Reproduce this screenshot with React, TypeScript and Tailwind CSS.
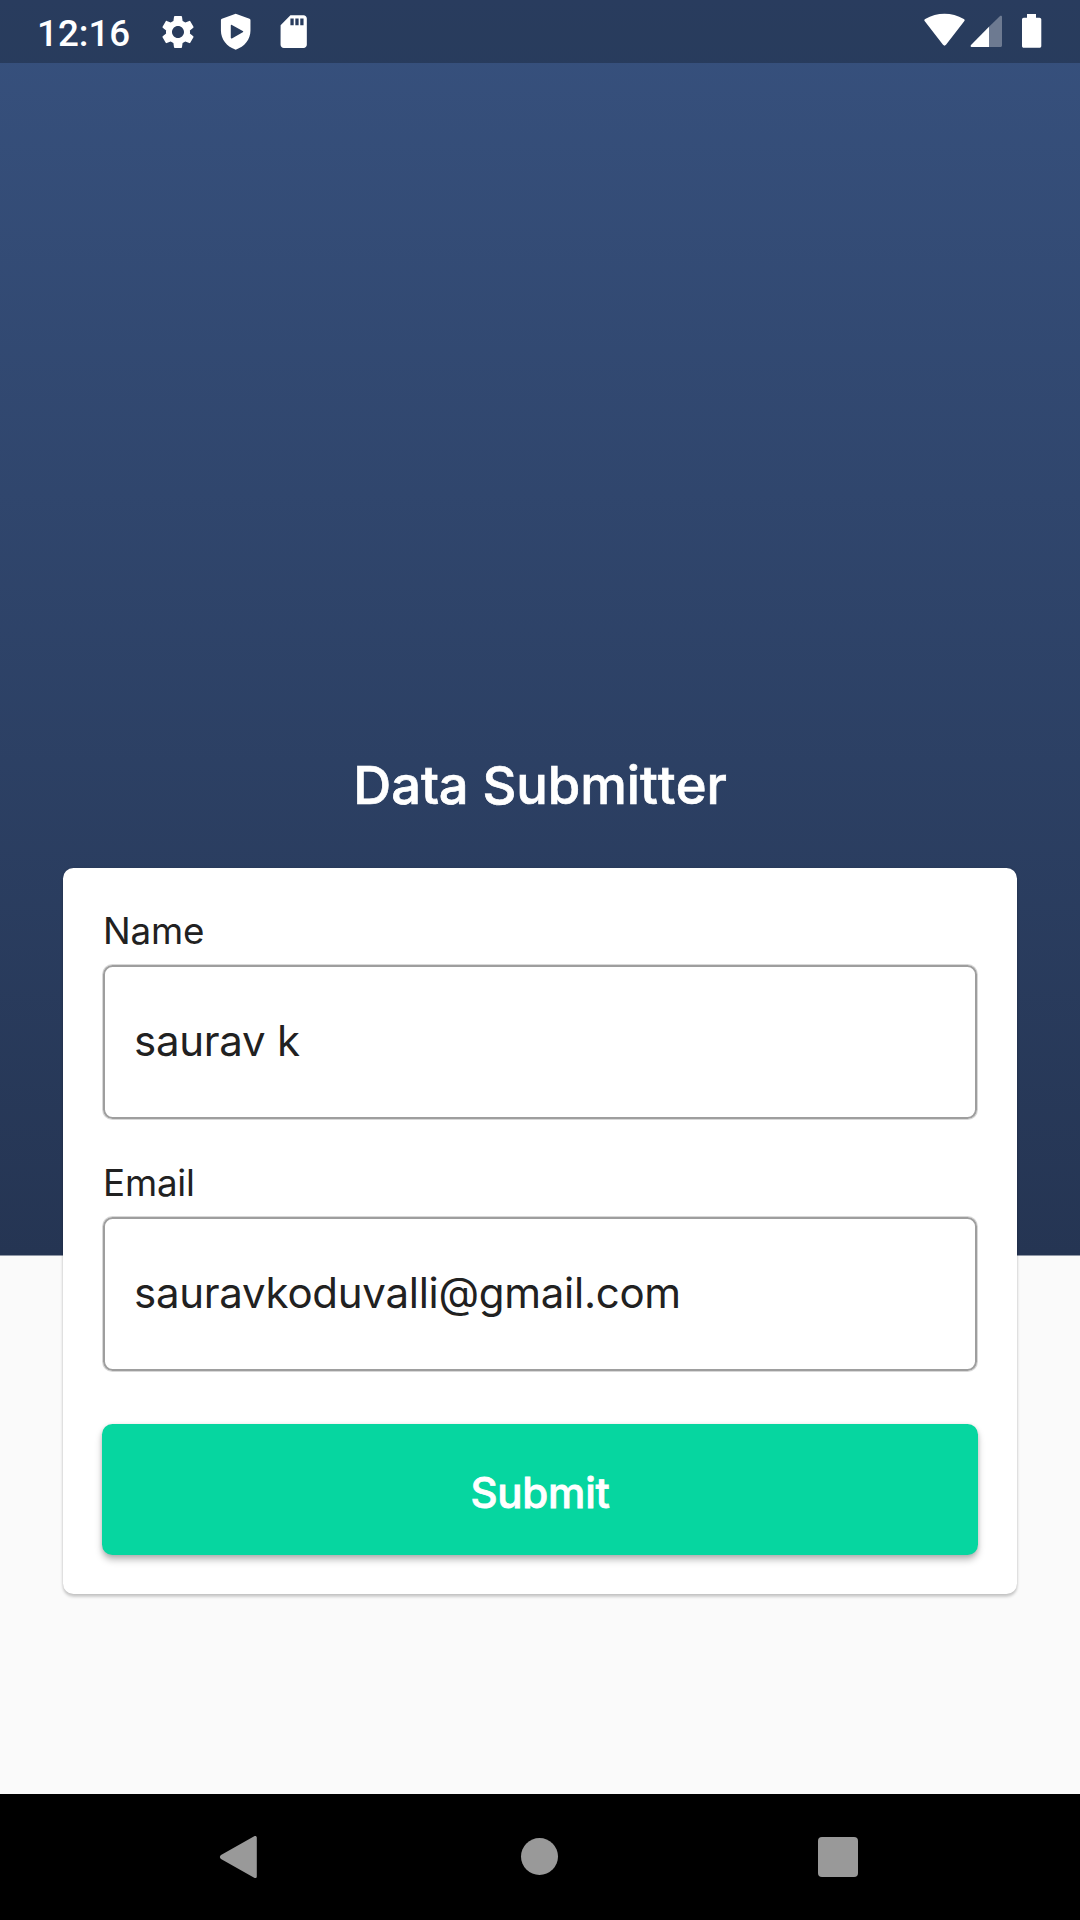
import React from 'react';
import { MdSettings, MdSdCard } from 'react-icons/md';

function StatusBar() {
  return (
    <header className="flex h-[63px] shrink-0 items-center bg-black/25 pl-[37px] pr-[32px] text-white">
      <span className="w-[121px] pt-[5px] font-['Roboto'] text-[36.75px] leading-none font-medium">12:16</span>
      <div className="flex items-center gap-[18.3px]">
        <MdSettings className="size-[40px]" />
        <svg viewBox="0 0 24 24" className="size-[39.4px]" fill="currentColor">
          <path
            fillRule="evenodd"
            d="M12 1 3.6 4.1C3.2 4.3 3 4.6 3 5v6.5c0 5.1 3.6 9.8 9 11.5 5.4-1.7 9-6.4 9-11.5V5c0-.4-.2-.7-.6-.9L12 1zM9 8.3c0-.4.4-.6.7-.4l6.6 3.7c.4.2.4.6 0 .8l-6.6 3.7c-.3.2-.7 0-.7-.4V8.3z"
          />
        </svg>
        <MdSdCard className="size-[39.4px]" />
      </div>
      <svg className="ml-auto h-[63px] w-[156px]" viewBox="892 0 156 63" fill="currentColor">
        <path d="M925 21.500c-1-1-.9-1.600.2-2.400 12-7 26.600-7 38.600 0 1.100.8 1.200 1.400.2 2.400l-18 23.300c-1 1.100-2 1.100-3 0z" />
        <path opacity=".32" d="M989 26.800 999.800 16.300c1-.9 2.200-.5 2.200.7v28.500c0 .9-.6 1.500-1.500 1.500H989z" />
        <path d="M989 26.800V47h-17.500c-1 0-1.200-1-.5-1.900z" />
        <path d="M1027 14h9v3.800h3.500c1 0 1.800.8 1.800 1.800V46c0 1-.8 1.800-1.800 1.800h-15.700c-1 0-1.800-.8-1.800-1.800V19.600c0-1 .8-1.800 1.800-1.800h3.200z" />
      </svg>
    </header>
  );
}

function Field({ label, value, type }: { label: string; value: string; type: string }) {
  return (
    <label className="flex flex-col">
      <span className="flex h-[44px] items-center pt-[2px] text-[36.75px] leading-none tracking-[-0.2px]">{label}</span>
      <input
        type={type}
        defaultValue={value}
        className="mt-[13px] h-[154px] w-full rounded-[9.5px] border-2 border-[#9e9e9e] px-[29px] pb-[3px] text-[42px] tracking-[-0.27px] shadow-[0_0_0_1px_#d8d8d8] outline-none"
      />
    </label>
  );
}

function NavBar() {
  return (
    <nav className="grid h-[126px] shrink-0 grid-cols-[258px_300px_260px_1fr] items-center bg-black text-[#999999]">
      <svg className="h-[44px] w-[40px] justify-self-end" viewBox="0 0 40 44" fill="currentColor">
        <path d="M36.200 1.300c1.200-.7 2.600-.1 2.600 1.300v38.800c0 1.400-1.400 2-2.600 1.300L3 24c-1.500-.9-1.500-3.100 0-4z" />
      </svg>
      <span className="mb-px size-[37px] justify-self-end rounded-full bg-current" />
      <span />
      <span className="size-10 rounded bg-current" />
    </nav>
  );
}

export default function App() {
  return (
    <div className="flex h-[1920px] w-[1080px] flex-col bg-[#fafafa] bg-[linear-gradient(to_bottom,#37517e,#253553)] bg-[length:100%_1255.5px] bg-no-repeat font-['Inter',sans-serif] text-[#212121]">
      <StatusBar />
      <main className="flex flex-1 flex-col px-[63px] pt-[690px]">
        <h1 className="flex h-[64px] items-center justify-center text-[52.5px] leading-none font-medium tracking-[-0.05px] text-white [-webkit-text-stroke:0.7px_white] [font-feature-settings:'calt'_0,'kern'_0,'liga'_0]">
          Data Submitter
        </h1>
        <form className="mt-[50.500px] flex h-[726.500px] flex-col rounded-[10.5px] bg-white px-[40px] pt-[40.500px] shadow-[0_3px_3px_rgba(0,0,0,0.18),0_0_3px_rgba(0,0,0,0.12)]">
          <Field label="Name" value="saurav k" type="text" />
          <div className="mt-[41px]">
            <Field label="Email" value="sauravkoduvalli@gmail.com" type="email" />
          </div>
          <button
            type="button"
            className="-mx-[0.6px] mt-[52.500px] h-[131.500px] rounded-[10.5px] bg-[#06d6a0] pt-[7px] text-[42px] leading-none font-medium tracking-[-0.25px] text-white shadow-[0_5px_7px_rgba(0,0,0,0.25),0_1px_4px_rgba(0,0,0,0.12)] [-webkit-text-stroke:0.8px_white]"
          >
            Submit
          </button>
        </form>
      </main>
      <NavBar />
    </div>
  );
}
